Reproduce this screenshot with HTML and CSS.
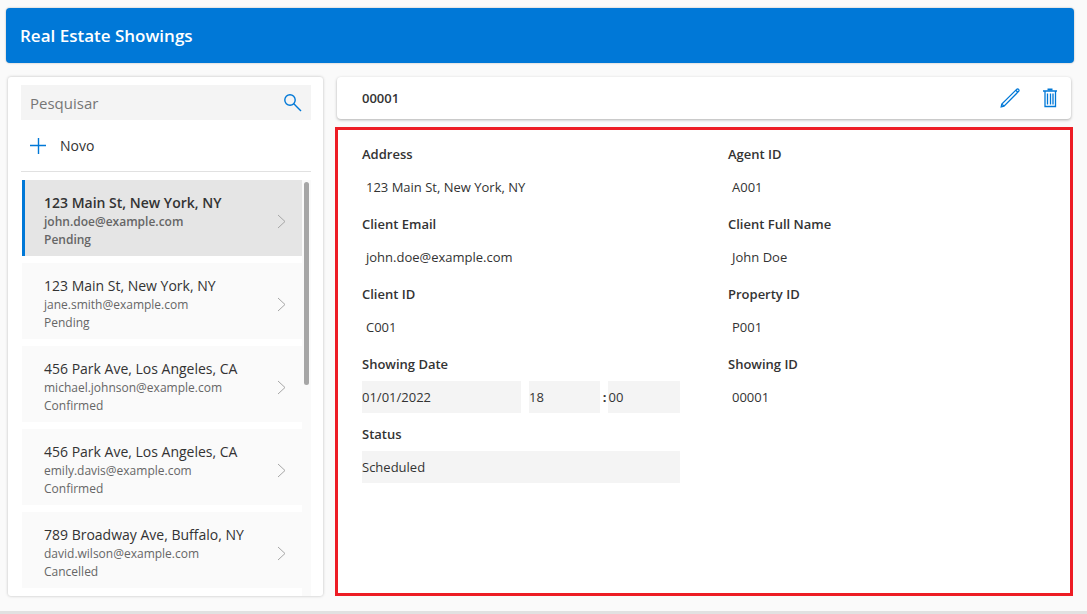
FILE: index.html
```html
<!DOCTYPE html>
<html lang="pt-BR">
<head>
	<meta charset="UTF-8">
	<meta name="viewport" content="width=device-width, initial-scale=1">
	<title>Real Estate Showings</title>
	<link rel="stylesheet" href="styles.css">
</head>
<body>
	<header class="header">
		<h1>Real Estate Showings</h1>
	</header>
	<main class="main">
		<section class="sidebar">
			<div class="search">
				<input type="text" placeholder="Pesquisar" aria-label="Pesquisar">
				<svg class="search-icon" viewBox="0 0 18 18" width="18" height="18">
					<circle cx="6" cy="6" r="5.2"/>
					<path d="M9.8 9.8L17 17"/>
				</svg>
			</div>
			<button class="new" type="button">
				<svg viewBox="0 0 16 16" width="16" height="16"><path d="M8.5 0v16M0 7.5h16"/></svg>
				<span>Novo</span>
			</button>
			<div class="gallery">
				<ul class="list">
					<li>
						<button class="item active" type="button">
							<span class="info">
								<span class="title">123 Main St, New York, NY</span>
								<span class="sub">john.doe@example.com</span>
								<span class="sub">Pending</span>
							</span>
							<svg class="arrow" viewBox="0 0 9 15" width="9" height="15"><path d="M1 1l7 6.5L1 14"/></svg>
						</button>
					</li>
					<li>
						<button class="item" type="button">
							<span class="info">
								<span class="title">123 Main St, New York, NY</span>
								<span class="sub">jane.smith@example.com</span>
								<span class="sub">Pending</span>
							</span>
							<svg class="arrow" viewBox="0 0 9 15" width="9" height="15"><path d="M1 1l7 6.5L1 14"/></svg>
						</button>
					</li>
					<li>
						<button class="item" type="button">
							<span class="info">
								<span class="title">456 Park Ave, Los Angeles, CA</span>
								<span class="sub">michael.johnson@example.com</span>
								<span class="sub">Confirmed</span>
							</span>
							<svg class="arrow" viewBox="0 0 9 15" width="9" height="15"><path d="M1 1l7 6.5L1 14"/></svg>
						</button>
					</li>
					<li>
						<button class="item" type="button">
							<span class="info">
								<span class="title">456 Park Ave, Los Angeles, CA</span>
								<span class="sub">emily.davis@example.com</span>
								<span class="sub">Confirmed</span>
							</span>
							<svg class="arrow" viewBox="0 0 9 15" width="9" height="15"><path d="M1 1l7 6.5L1 14"/></svg>
						</button>
					</li>
					<li>
						<button class="item" type="button">
							<span class="info">
								<span class="title">789 Broadway Ave, Buffalo, NY</span>
								<span class="sub">david.wilson@example.com</span>
								<span class="sub">Cancelled</span>
							</span>
							<svg class="arrow" viewBox="0 0 9 15" width="9" height="15"><path d="M1 1l7 6.5L1 14"/></svg>
						</button>
					</li>
				</ul>
				<div class="thumb"></div>
			</div>
		</section>

		<section class="content">
			<div class="toolbar">
				<h2>00001</h2>
				<button class="tool" type="button" aria-label="Editar">
					<svg viewBox="0 0 20 20" width="20" height="20">
						<path d="M1.2 18.8l.6-2.8L16.6 1.4a1.4 1.4 0 0 1 2 2L4 18.2zM1.8 16l2.2 2.2M15.8 2.2l2 2"/>
					</svg>
				</button>
				<button class="tool" type="button" aria-label="Excluir">
					<svg viewBox="0 0 16 20" width="16" height="20">
						<path d="M1 3h14M3 3v15.5h10.5V3M5.5 5.5v11M8.5 5.5v11M11 5.5v11"/>
						<path d="M5.5 1.5h5" stroke-width="2"/>
					</svg>
				</button>
			</div>

			<form class="details">
				<div class="field">
					<span class="label">Address</span>
					<span class="value">123 Main St, New York, NY</span>
				</div>
				<div class="field">
					<span class="label">Agent ID</span>
					<span class="value">A001</span>
				</div>
				<div class="field">
					<span class="label">Client Email</span>
					<span class="value">john.doe@example.com</span>
				</div>
				<div class="field">
					<span class="label">Client Full Name</span>
					<span class="value">John Doe</span>
				</div>
				<div class="field">
					<span class="label">Client ID</span>
					<span class="value">C001</span>
				</div>
				<div class="field">
					<span class="label">Property ID</span>
					<span class="value">P001</span>
				</div>
				<div class="field">
					<label class="label" for="date">Showing Date</label>
					<div class="datetime">
						<input class="control" id="date" type="text" value="01/01/2022" readonly>
						<div class="time">
							<select class="control" aria-label="Hora"><option>18</option></select>
							<span class="colon">:</span>
							<select class="control" aria-label="Minuto"><option>00</option></select>
						</div>
					</div>
				</div>
				<div class="field">
					<span class="label">Showing ID</span>
					<span class="value">00001</span>
				</div>
				<div class="field">
					<label class="label" for="status">Status</label>
					<select class="control" id="status"><option>Scheduled</option></select>
				</div>
			</form>
		</section>
	</main>
	<footer class="footer"></footer>
</body>
</html>
```

FILE: styles.css
```css
*{margin: 0;padding: 0;box-sizing: border-box;}
body{
	display: flex;
	flex-direction: column;
	height: 100vh;
	background: #fafafa;
	color: #333;
	font-family: "Segoe UI", "Open Sans", sans-serif;
	font-size: 13px;
}
ul{list-style: none;}
button, input, select{
	border: 0;
	border-radius: 0;
	background: none;
	color: inherit;
	font: inherit;
	text-align: left;
}
button{cursor: pointer;}
svg{flex: none;fill: none;stroke: #0078d7;}

.header{
	margin: 8px 13px 0 6px;
	padding: 0 14px;
	border-radius: 4px;
	background: #0078d7;
	box-shadow: 0 0 2px rgba(0,0,0,.3);
	color: #fff;
}
.header h1{font-size: 17px;font-weight: 600;line-height: 55px;}

.main{
	display: flex;
	flex: 1;
	gap: 12px;
	min-height: 0;
	padding: 14px 14px 15px 8px;
}

/* left panel */
.sidebar{
	display: flex;
	flex-direction: column;
	width: 315px;
	padding: 8px 12px 0 13px;
	border-radius: 3px;
	background: #fff;
	box-shadow: 0 0 3px rgba(0,0,0,.25);
}
.search{
	display: flex;
	align-items: center;
	height: 35px;
	padding: 0 9px;
	background: #f4f4f4;
}
.search input{
	flex: 1;
	min-width: 0;
	height: 35px;
	font-size: 15px;
	outline: none;
}
.search input::placeholder{color: #767676;}
.search-icon{stroke-width: 1.4;}
.new{
	display: flex;
	align-items: center;
	gap: 14px;
	height: 52px;
	padding: 0 9px;
	border-bottom: 1px solid #e1e1e1;
	font-size: 14px;
}
.new svg{stroke-width: 1.4;}
.gallery{
	position: relative;
	flex: 1;
	min-height: 0;
	margin-top: 8px;
	padding-left: 1px;
	background: linear-gradient(to left, #fafafa 9px, #fff 9px);
}
.list{
	display: flex;
	flex-direction: column;
	gap: 7px;
	height: 100%;
	padding-right: 9px;
	overflow-y: auto;
	scrollbar-width: none;
}
.item{
	display: flex;
	align-items: center;
	justify-content: space-between;
	width: 100%;
	height: 76px;
	padding: 6px 16px 0 19px;
	border-left: 3px solid #fafafa;
	background: #fafafa;
}
.item.active{
	border-left-color: #0078d7;
	background: #e5e5e5;
	font-weight: 600;
}
.info{display: flex;flex-direction: column;}
.title{font-size: 14px;line-height: 20px;}
.sub{color: #666;font-size: 12px;line-height: 18px;}
.arrow{stroke: #a6a6a6;}
.thumb{
	position: absolute;
	top: 2px;
	right: 2px;
	width: 5px;
	height: 203px;
	border-radius: 3px;
	background: #a6a6a6;
}

/* right panel */
.content{
	display: flex;
	flex: 1;
	flex-direction: column;
	gap: 8px;
	min-width: 0;
}
.toolbar{
	display: flex;
	align-items: center;
	gap: 22px;
	height: 42px;
	margin: 0 2px;
	padding: 0 13px 0 25px;
	border-radius: 4px;
	background: #fff;
	box-shadow: 0 1px 3px rgba(0,0,0,.3);
}
.toolbar h2{flex: 1;font-size: 13px;font-weight: 600;}
.tool{display: flex;}
.tool svg{stroke-width: 1.3;}
.details{
	display: grid;
	flex: 1;
	grid-template-columns: 1fr 1fr;
	align-content: start;
	row-gap: 11px;
	padding-top: 14px;
	border: 3px solid #ed1c24;
	background: #fff;
}
.field{
	display: flex;
	flex-direction: column;
	gap: 7px;
	padding: 0 24px;
}
.label{font-weight: 600;line-height: 20px;}
.value{padding: 0 4px;line-height: 32px;}
.control{
	width: 100%;
	min-width: 0;
	height: 32px;
	background: #f4f4f4;
	appearance: none;
	outline: none;
}
.datetime{display: grid;grid-template-columns: 20fr 19fr;gap: 8px;}
.time{display: flex;}
.colon{flex: none;width: 8px;font-weight: 700;line-height: 32px;text-align: center;}

.footer{height: 3px;background: #e1e1e1;}
```
